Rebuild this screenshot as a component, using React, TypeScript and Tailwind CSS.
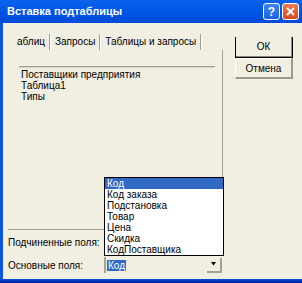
const font = "font-['Liberation_Sans',_Arial,_sans-serif]";

function Separator() {
  return (
    <div className="flex h-[16px] w-[2px] mx-[4px]">
      <div className="w-[1px] bg-[#a19f93]" />
      <div className="w-[1px] bg-white" />
    </div>
  );
}

export default function App() {
  const fields = ["Код", "Код заказа", "Подстановка", "Товар", "Цена", "Скидка", "КодПоставщика"];

  return (
    <div className={`w-[302px] h-[283px] overflow-hidden flex flex-col bg-[#f1efe2] text-[10px] text-black ${font}`}>
      {/* Title bar */}
      <div className="h-[23px] flex items-center pl-[7px] pr-[3px] bg-linear-to-b from-[#0b63ec] via-[#0055e5] to-[#004ad8]">
        <span className="text-white font-bold text-[11px] leading-none">Вставка подтаблицы</span>
        <div className="ml-auto flex gap-[2px]">
          <div className="w-[17px] h-[17px] rounded-[3px] border border-white bg-linear-to-b from-[#3a85f5] to-[#1d5fdf] flex items-center justify-center text-white font-bold text-[12px] leading-none">
            ?
          </div>
          <div className="w-[17px] h-[17px] rounded-[3px] border border-white bg-linear-to-b from-[#ec7a52] to-[#d8461c] flex items-center justify-center">
            <svg width="9" height="9" viewBox="0 0 9 9">
              <path d="M1 1L8 8M8 1L1 8" stroke="white" strokeWidth="2" />
            </svg>
          </div>
        </div>
      </div>

      <div className="flex-1 flex">
        {/* left window edge */}
        <div className="w-[3px] bg-[#0a55e0]" />

        <div className="flex-1 flex">
          {/* left column: tabs + panel + fields */}
          <div className="w-[220px] flex flex-col">
            <div className="mt-[10px] h-[17px] pl-[14px] flex items-center">
              <span>аблиц</span>
              <Separator />
              <span>Запросы</span>
              <Separator />
              <span>Таблицы и запросы</span>
              <Separator />
            </div>

            <div className="ml-[5px] h-[180px] border-r border-b border-[#a5a396] flex flex-col">
              <div className="mt-[16px] ml-[11px] w-[196px] h-[2px] bg-[#a19f93] border-b border-[#d6d4c8]" />
              <div className="mt-[1px] pl-[13px] flex flex-col leading-[11px]">
                <span>Поставщики предприятия</span>
                <span>Таблица1</span>
                <span>Типы</span>
              </div>
            </div>

            <div className="mt-[4px] h-[16px] pl-[5px] flex items-center">Подчиненные поля:</div>

            <div className="mt-[7px] h-[16px] pl-[5px] flex items-center">
              <span className="w-[96px]">Основные поля:</span>
              <div className="relative w-[118px] h-[16px] border-l-2 border-[#a5a396] flex items-center">
                <span className="ml-[1px] px-[1px] leading-[11px] bg-[#316ac5] text-white">Код</span>
                <div className="ml-auto w-[15px] h-[15px] border-r-2 border-b-2 border-[#a5a396] flex items-center justify-center">
                  <svg width="5" height="4" viewBox="0 0 5 4">
                    <path d="M0 0H5L2.5 3.5Z" fill="black" />
                  </svg>
                </div>

                {/* dropped-down list */}
                <div className="absolute left-[-2px] bottom-[17px] w-[120px] border border-black bg-white flex flex-col leading-[11px]">
                  {fields.map((f, i) => (
                    <span
                      key={f}
                      className={`h-[11px] pl-[2px] ${i === 0 ? "bg-[#316ac5] text-white" : ""}`}
                    >
                      {f}
                    </span>
                  ))}
                </div>
              </div>
            </div>
          </div>

          {/* right column: buttons */}
          <div className="ml-[12px] flex flex-col">
            <div className="mt-[14px] w-[58px] h-[21px] border-x border-b border-black flex items-center justify-center">
              <div className="w-full h-full border-r border-b border-[#8e8b7e] flex items-center justify-center">ОК</div>
            </div>
            <div className="mt-[0px] w-[58px] h-[21px] border-t border-l border-white border-r-2 border-b-2 border-r-[#9d9a8c] border-b-[#9d9a8c] flex items-center justify-center">
              Отмена
            </div>
          </div>
        </div>
      </div>

      {/* bottom window edge */}
      <div className="h-[4px] bg-linear-to-b from-[#0a4fdc] to-[#001d9c]" />
    </div>
  );
}
